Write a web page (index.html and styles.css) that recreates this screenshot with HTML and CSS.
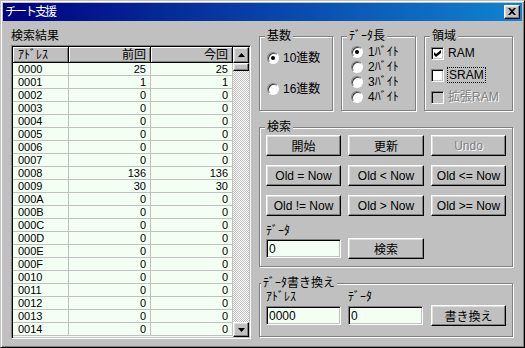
FILE: index.html
```html
<!DOCTYPE html>
<html lang="ja">
<head>
  <meta charset="utf-8">
  <title>チート支援</title>
  <link rel="stylesheet" href="styles.css">
</head>
<body>
  <div class="window">
    <div class="titlebar">
      <span class="title">チート支援</span>
      <button class="close raised" type="button">
        <svg width="8" height="7" viewBox="0 0 8 7"><path d="M0 0h2l2 2 2-2h2L5 3.5 8 7H6L4 5 2 7H0l3-3.5z"/></svg>
      </button>
    </div>
    <div class="main">
      <!-- 検索結果 -->
      <div class="left">
        <div class="caption">検索結果</div>
        <div class="listview">
          <div class="grid-wrap">
            <table class="grid">
              <colgroup>
                <col style="width:56px">
                <col style="width:82px">
                <col style="width:82px">
              </colgroup>
              <thead>
                <tr><th class="addr">ｱﾄﾞﾚｽ</th><th>前回</th><th>今回</th></tr>
              </thead>
              <tbody>
                <tr><td class="addr">0000</td><td>25</td><td>25</td></tr>
                <tr><td class="addr">0001</td><td>1</td><td>1</td></tr>
                <tr><td class="addr">0002</td><td>0</td><td>0</td></tr>
                <tr><td class="addr">0003</td><td>0</td><td>0</td></tr>
                <tr><td class="addr">0004</td><td>0</td><td>0</td></tr>
                <tr><td class="addr">0005</td><td>0</td><td>0</td></tr>
                <tr><td class="addr">0006</td><td>0</td><td>0</td></tr>
                <tr><td class="addr">0007</td><td>0</td><td>0</td></tr>
                <tr><td class="addr">0008</td><td>136</td><td>136</td></tr>
                <tr><td class="addr">0009</td><td>30</td><td>30</td></tr>
                <tr><td class="addr">000A</td><td>0</td><td>0</td></tr>
                <tr><td class="addr">000B</td><td>0</td><td>0</td></tr>
                <tr><td class="addr">000C</td><td>0</td><td>0</td></tr>
                <tr><td class="addr">000D</td><td>0</td><td>0</td></tr>
                <tr><td class="addr">000E</td><td>0</td><td>0</td></tr>
                <tr><td class="addr">000F</td><td>0</td><td>0</td></tr>
                <tr><td class="addr">0010</td><td>0</td><td>0</td></tr>
                <tr><td class="addr">0011</td><td>0</td><td>0</td></tr>
                <tr><td class="addr">0012</td><td>0</td><td>0</td></tr>
                <tr><td class="addr">0013</td><td>0</td><td>0</td></tr>
                <tr><td class="addr">0014</td><td>0</td><td>0</td></tr>
              </tbody>
            </table>
          </div>
          <div class="scrollbar">
            <div class="sb-btn raised">
              <svg width="7" height="4" viewBox="0 0 7 4"><path d="M3.5 0L7 4H0z"/></svg>
            </div>
            <div class="sb-thumb raised"></div>
            <div class="sb-track"></div>
            <div class="sb-btn down raised">
              <svg width="7" height="4" viewBox="0 0 7 4"><path d="M0 0h7L3.5 4z"/></svg>
            </div>
          </div>
        </div>
      </div>

      <div class="right">
        <div class="row-top">
          <div class="group g-radix">
            <div class="group-title">基数</div>
            <div class="opts">
              <div class="option"><span class="radio checked"></span>10進数</div>
              <div class="option"><span class="radio"></span>16進数</div>
            </div>
          </div>
          <div class="group g-len">
            <div class="group-title">ﾃﾞｰﾀ長</div>
            <div class="opts">
              <div class="option"><span class="radio checked"></span>1ﾊﾞｲﾄ</div>
              <div class="option"><span class="radio"></span>2ﾊﾞｲﾄ</div>
              <div class="option"><span class="radio"></span>3ﾊﾞｲﾄ</div>
              <div class="option"><span class="radio"></span>4ﾊﾞｲﾄ</div>
            </div>
          </div>
          <div class="group g-area">
            <div class="group-title">領域</div>
            <div class="opts">
              <div class="option">
                <span class="check"><svg width="7" height="7" viewBox="0 0 7 7"><path d="M0 2l2 2 5-4v3l-5 4-2-2z"/></svg></span>RAM
              </div>
              <div class="option"><span class="check"></span><span class="focus">SRAM</span></div>
              <div class="option disabled"><span class="check off"></span>拡張RAM</div>
            </div>
          </div>
        </div>

        <div class="group g-search">
          <div class="group-title">検索</div>
          <div class="btn-grid">
            <button class="btn" type="button">開始</button>
            <button class="btn" type="button">更新</button>
            <button class="btn" type="button" disabled>Undo</button>
            <button class="btn" type="button">Old = Now</button>
            <button class="btn" type="button">Old &lt; Now</button>
            <button class="btn" type="button">Old &lt;= Now</button>
            <button class="btn" type="button">Old != Now</button>
            <button class="btn" type="button">Old &gt; Now</button>
            <button class="btn" type="button">Old &gt;= Now</button>
          </div>
          <div class="field-label">ﾃﾞｰﾀ</div>
          <div class="field-row">
            <input class="edit" type="text" value="0">
            <button class="btn" type="button">検索</button>
          </div>
        </div>

        <div class="group g-write">
          <div class="group-title">ﾃﾞｰﾀ書き換え</div>
          <div class="label-row">
            <span>ｱﾄﾞﾚｽ</span>
            <span>ﾃﾞｰﾀ</span>
          </div>
          <div class="field-row write">
            <input class="edit" type="text" value="0000">
            <input class="edit" type="text" value="0">
            <button class="btn" type="button">書き換え</button>
          </div>
        </div>
      </div>
    </div>
  </div>
</body>
</html>
```

FILE: styles.css
```css
body {
  margin: 0;
  background: #c0c0c0;
  font-family: "Liberation Sans", "Noto Sans CJK JP", sans-serif;
  font-size: 12px;
  color: #000;
}

.window {
  width: 525px;
  height: 348px;
  box-sizing: border-box;
  padding: 2px;
  border: 1px solid;
  border-color: #c0c0c0 #000 #000 #c0c0c0;
  box-shadow: inset 1px 1px #fff, inset -1px -1px #808080;
  background: #c0c0c0;
  overflow: hidden;
}

/* 3D枠 */
.raised {
  box-sizing: border-box;
  border: 1px solid;
  border-color: #fff #000 #000 #fff;
  box-shadow: inset -1px -1px #808080, inset 1px 1px #dfdfdf;
  background: #c0c0c0;
}

.titlebar {
  height: 18px;
  display: flex;
  align-items: center;
  justify-content: space-between;
  padding: 0 2px;
  background: linear-gradient(to right, #000080, #1084d0);
}
.title {
  color: #fff;
  line-height: 18px;
  letter-spacing: -2px;
}
.close {
  width: 16px;
  height: 14px;
  padding: 0 1px 1px 0;
  display: flex;
  align-items: center;
  justify-content: center;
}

.main {
  display: flex;
  padding: 7px 0 0 8px;
}

/* 左側：検索結果 */
.left {
  width: 240px;
}
.caption {
  line-height: 16px;
  margin-bottom: 1px;
}
.listview {
  display: flex;
  height: 294px;
  box-sizing: border-box;
  padding: 1px;
  border: 1px solid;
  border-color: #808080 #fff #fff #808080;
  box-shadow: inset 1px 1px #000, inset -1px -1px #c0c0c0;
}
.grid-wrap {
  width: 220px;
  overflow: hidden;
  background: #f4fff4;
}
.grid {
  width: 220px;
  table-layout: fixed;
  border-collapse: separate;
  border-spacing: 0;
}
.grid th {
  height: 16px;
  box-sizing: border-box;
  padding: 0 4px;
  font-weight: normal;
  text-align: right;
  line-height: 14px;
  background: #c0c0c0;
  border-right: 1px solid #000;
  border-bottom: 1px solid #000;
  box-shadow: inset 1px 1px #fff, inset -1px -1px #808080;
}
.grid td {
  height: 13px;
  box-sizing: border-box;
  padding: 0 4px;
  font-size: 11px;
  line-height: 12px;
  text-align: right;
  white-space: nowrap;
  border-right: 1px solid #c0c0c0;
  border-bottom: 1px solid #c0c0c0;
}
.grid .addr {
  text-align: left;
  padding-left: 5px;
}

.scrollbar {
  width: 16px;
  display: flex;
  flex-direction: column;
}
.sb-btn {
  height: 16px;
  display: flex;
  align-items: center;
  justify-content: center;
}
.sb-btn.down {
  height: 15px;
}
.sb-thumb {
  height: 8px;
}
.sb-track {
  flex: 1;
  background: repeating-conic-gradient(#fff 0 25%, #c0c0c0 0 50%) 0 0 / 2px 2px;
}

/* 右側 */
.right {
  width: 254px;
  margin-left: 8px;
}
.row-top {
  display: flex;
  gap: 8px;
  margin-top: 8px;
}
.group {
  box-sizing: border-box;
  border: 1px solid #808080;
  box-shadow: inset 1px 1px #fff, 1px 1px #fff;
}
.group-title {
  width: fit-content;
  margin: -8px 0 0 5px;
  padding: 0 2px;
  line-height: 14px;
  background: #c0c0c0;
}
.g-radix { width: 74px; height: 75px; }
.g-len { width: 75px; height: 75px; }
.g-area { width: 89px; height: 75px; }

.opts {
  display: flex;
  flex-direction: column;
}
.option {
  display: flex;
  align-items: center;
  gap: 4px;
  height: 14px;
  line-height: 14px;
  white-space: nowrap;
}
.g-radix .opts { padding: 8px 0 0 7px; gap: 17px; }
.g-len .opts { padding: 1px 0 0 9px; }
.g-len .option { height: 15px; gap: 5px; }
.g-area .opts { padding: 3px 0 0 6px; gap: 8px; }

.radio {
  width: 12px;
  height: 12px;
  box-sizing: border-box;
  border-radius: 50%;
  border: 1px solid;
  border-color: #808080 #fff #fff #808080;
  box-shadow: inset 1px 1px #404040;
  background: #fff;
  display: flex;
  align-items: center;
  justify-content: center;
}
.radio.checked::after {
  content: "";
  width: 4px;
  height: 4px;
  border-radius: 50%;
  background: #000;
}
.check {
  width: 13px;
  height: 13px;
  box-sizing: border-box;
  border: 1px solid;
  border-color: #808080 #fff #fff #808080;
  box-shadow: inset 1px 1px #000, inset -1px -1px #c0c0c0;
  background: #fff;
  display: flex;
  align-items: center;
  justify-content: center;
}
.check.off {
  background: #c0c0c0;
}
.focus {
  outline: 1px dotted #000;
  padding: 0 1px;
}
.disabled {
  color: #808080;
  text-shadow: 1px 1px #fff;
}

.g-search {
  height: 140px;
  margin-top: 16px;
}
.g-write {
  height: 54px;
  margin-top: 16px;
}
.g-write .group-title {
  margin-left: 1px;
}

.btn-grid {
  display: grid;
  grid-template-columns: 75px 76px 75px;
  column-gap: 7px;
  row-gap: 9px;
  margin: 1px 0 0 6px;
}
.btn {
  height: 21px;
  box-sizing: border-box;
  padding: 0;
  font: inherit;
  color: #000;
  white-space: nowrap;
  border: 1px solid;
  border-color: #fff #000 #000 #fff;
  box-shadow: inset -1px -1px #808080, inset 1px 1px #dfdfdf;
  background: #c0c0c0;
}
.btn:disabled {
  color: #808080;
  text-shadow: 1px 1px #fff;
}

.field-label {
  margin: 8px 0 0 6px;
  line-height: 14px;
}
.label-row,
.field-row {
  display: grid;
  grid-template-columns: 75px 76px 75px;
  column-gap: 7px;
  margin-left: 6px;
}
.label-row {
  line-height: 14px;
}
.field-row {
  height: 21px;
  align-items: center;
}
.field-row.write {
  margin-top: 1px;
}
.edit {
  width: 75px;
  height: 19px;
  box-sizing: border-box;
  margin: 0;
  padding: 0 2px;
  font: inherit;
  color: #000;
  border: 1px solid;
  border-color: #808080 #fff #fff #808080;
  box-shadow: inset 1px 1px #000, inset -1px -1px #c0c0c0;
  background: #f4fff4;
  outline: none;
}
```
